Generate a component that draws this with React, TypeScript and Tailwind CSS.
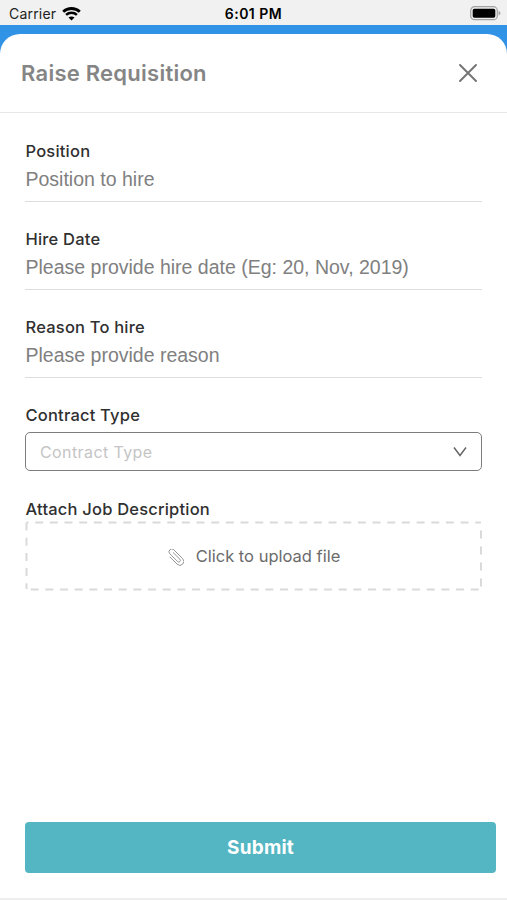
import React from 'react'

const fields = [
  { label: 'Position', placeholder: 'Position to hire' },
  { label: 'Hire Date', placeholder: 'Please provide hire date (Eg: 20, Nov, 2019)' },
  { label: 'Reason To hire', placeholder: 'Please provide reason' },
]

const StatusBar = () => (
  <div className="grid h-[25px] shrink-0 grid-cols-3 items-center bg-[#f1f1f1] pt-[2px] text-black">
    <div className="flex items-center gap-1.5 pl-[9px]">
      <span className="text-[14px] leading-none tracking-[0.2px] text-[#222222]">Carrier</span>
      <svg width="19" height="14" viewBox="0 0 19 14" fill="none" stroke="black">
        <path d="M1.2 4.8C5.8 0.4 13.2 0.4 17.8 4.8" strokeWidth="2.8" />
        <path d="M4.1 7.9C7.1 5.1 11.9 5.1 14.9 7.9" strokeWidth="2.5" />
        <path d="M9.5 13.6 6.5 10.5C8.2 9 10.8 9 12.5 10.5Z" fill="black" stroke="none" />
      </svg>
    </div>
    <span className="text-center text-[14px] font-semibold leading-none tracking-[0.5px]">6:01 PM</span>
    <svg className="mr-1.5 justify-self-end" width="31" height="15" viewBox="0 0 31 15">
      <rect x="0.7" y="0.7" width="26.6" height="13" rx="3.8" fill="#ececec" stroke="#a3a3a3" strokeWidth="1.2" />
      <rect x="2.7" y="2.7" width="22.6" height="9" rx="1.7" fill="black" />
      <path d="M28.6 4.8C31 5.8 31 8.6 28.6 9.6Z" fill="#a3a3a3" />
    </svg>
  </div>
)

const CloseIcon = () => (
  <svg width="18" height="18" viewBox="0 0 18 18" fill="none" stroke="#737373" strokeWidth="1.9" strokeLinecap="round">
    <path d="M1 1 17 17M17 1 1 17" />
  </svg>
)

const PaperclipIcon = () => (
  <svg className="mt-[3px]" width="17" height="17" viewBox="0 0 17 17" fill="none" stroke="#909090" strokeWidth="0.9" strokeLinecap="round">
    <path
      transform="translate(8.5 8.3) rotate(-45)"
      d="M1.7-5V4.5a1.6 1.6 0 0 1-3.2 0V-6.5a2.8 2.8 0 0 1 5.6 0V6a3.9 3.9 0 0 1-7.8 0V-4"
    />
  </svg>
)

const Label = ({ children }: { children: React.ReactNode }) => (
  <label className="block pl-[0.5px] text-[16.5px] font-medium leading-5 tracking-[0.2px] text-[#303030]">
    {children}
  </label>
)

const App = () => {
  return (
    <div className="flex h-[900px] w-full flex-col overflow-hidden bg-[#3093e5] font-['Inter',sans-serif]">
      <StatusBar />

      <main className="mt-[9px] flex flex-1 flex-col rounded-t-[20px] border-b-2 border-[#eeeeee] bg-white">
        <header className="flex h-[79px] shrink-0 items-center justify-between border-b border-[#e8e8e8] pl-[21px] pr-[30px]">
          <h1 className="text-[22px] font-semibold leading-none tracking-[0.25px] text-[#858585]">Raise Requisition</h1>
          <button aria-label="Close">
            <CloseIcon />
          </button>
        </header>

        <form className="flex flex-1 flex-col pl-[25px] pr-[11px] pt-7">
          <div className="pr-[14px]">
            {fields.map((field) => (
              <div key={field.label} className="mb-[27px] h-[61px] border-b border-[#dedede]">
                <Label>{field.label}</Label>
                <p className="mt-1.5 pl-[0.5px] font-['Liberation_Sans',sans-serif] text-[19.5px] leading-6 text-[#808080]">
                  {field.placeholder}
                </p>
              </div>
            ))}

            <Label>Contract Type</Label>
            <div className="mt-[7px] flex h-[39px] items-center justify-between rounded-[5px] border-[1.5px] border-[#7d7d7d] pl-[14px] pr-[14px]">
              <span className="text-[16px] tracking-[0.4px] text-[#c5c5c5]">Contract Type</span>
              <svg width="14" height="11" viewBox="0 0 14 11" fill="none" stroke="#666666" strokeWidth="1.5">
                <path d="M1 1.5 7 9.5 13 1.5" />
              </svg>
            </div>

            <div className="mt-7">
              <Label>Attach Job Description</Label>
            </div>
            <div className="relative mt-[2px] flex h-[70px] items-center justify-center gap-3">
              <svg className="absolute inset-0" width="458" height="70" fill="none" stroke="#dadada" strokeWidth="2">
                <path d="M1.5 1.5H456" strokeDasharray="8 6.67" strokeDashoffset="6" />
                <path d="M1.5 68.5H456" strokeDasharray="8 6.67" strokeDashoffset="10.5" />
                <path d="M1.5 1.5V68" strokeDasharray="8 7.2" />
                <path d="M456 1.5V68" strokeDasharray="8 8" strokeDashoffset="8" />
              </svg>
              <PaperclipIcon />
              <span className="text-[16.5px] text-[#6b6b6b]">Click to upload file</span>
            </div>
          </div>

          <button
            type="button"
            className="mb-[25px] mt-auto h-[51px] rounded-[4px] bg-[#53b6c2] pt-px text-[19px] font-bold tracking-[0.2px] text-white"
          >
            Submit
          </button>
        </form>
      </main>
    </div>
  )
}

export default App
